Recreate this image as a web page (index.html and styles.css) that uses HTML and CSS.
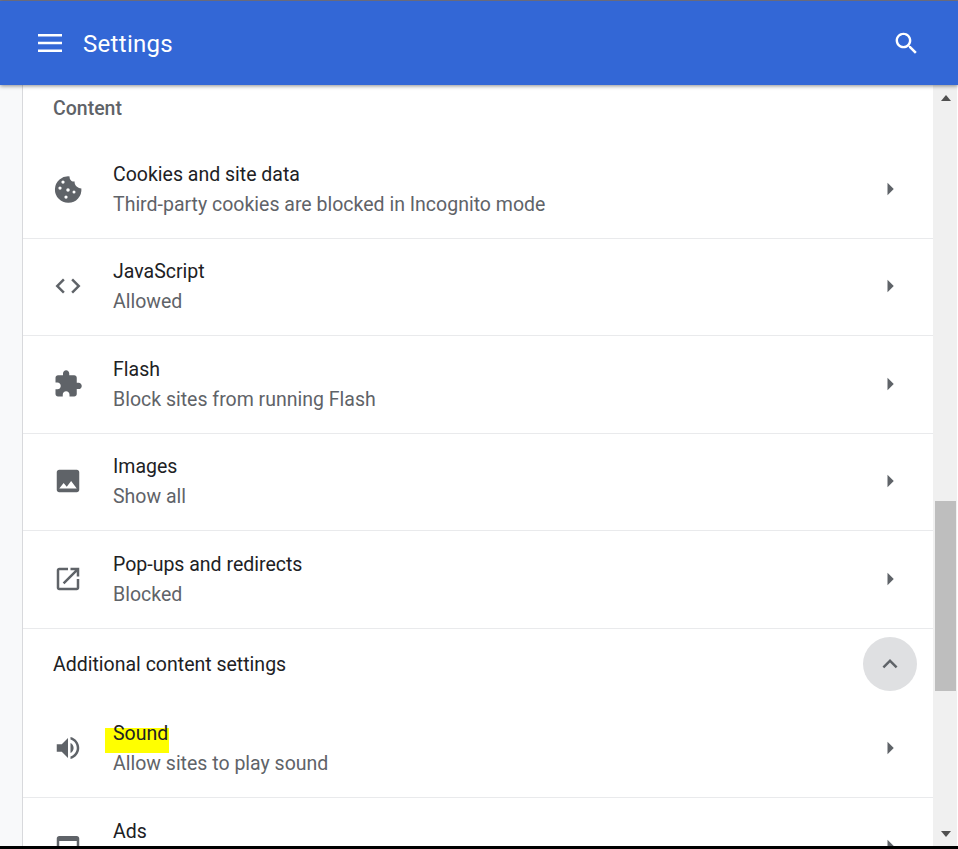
FILE: index.html
```html
<!DOCTYPE html>
<html lang="en">
<head>
<meta charset="utf-8">
<title>Settings</title>
<link rel="stylesheet" href="styles.css">
</head>
<body>
<div class="window">
  <header class="toolbar">
    <svg class="menu-icon" viewBox="0 0 24 18"><path d="M0 0h24v2.6H0zM0 7.7h24v2.6H0zM0 15.4h24V18H0z"/></svg>
    <h1 class="toolbar-title">Settings</h1>
    <svg class="search-icon" viewBox="0 0 24 24"><path d="M15.5 14h-.79l-.28-.27C15.41 12.59 16 11.11 16 9.5 16 5.91 13.09 3 9.5 3S3 5.91 3 9.5 5.91 16 9.5 16c1.61 0 3.09-.59 4.23-1.57l.27.28v.79l5 4.99L20.49 19l-4.99-5zm-6 0C7.01 14 5 11.99 5 9.5S7.01 5 9.5 5 14 7.01 14 9.5 11.99 14 9.5 14z"/></svg>
  </header>
  <div class="viewport">
    <main class="page">
      <section class="card">
        <h2 class="section-title">Content</h2>

        <div class="row row-first">
          <svg class="icon" viewBox="0 0 24 24"><path fill-rule="evenodd" d="M13.3 1.9c-.3 2.5 1.7 4.5 4 4 -.4 2.8 2.3 5.3 5.4 5.6A10.6 10.6 0 1 1 13.3 1.9zM6.7 6.4a1.3 1.3 0 1 0 2.6 0a1.3 1.3 0 1 0-2.6 0zM4.3 11.2a1.3 1.3 0 1 0 2.6 0a1.3 1.3 0 1 0-2.6 0zM10.6 12.8a1.4 1.4 0 1 0 2.8 0a1.4 1.4 0 1 0-2.8 0zM15.6 14.4a1.2 1.2 0 1 0 2.4 0a1.2 1.2 0 1 0-2.4 0zM9.1 18.4a1.3 1.3 0 1 0 2.6 0a1.3 1.3 0 1 0-2.6 0z"/></svg>
          <div class="row-text">
            <div class="row-title">Cookies and site data</div>
            <div class="row-sub">Third-party cookies are blocked in Incognito mode</div>
          </div>
          <svg class="arrow" viewBox="0 0 24 24"><path d="M10 17l5-5-5-5v10z"/></svg>
        </div>

        <div class="row row-divided">
          <svg class="icon" viewBox="0 0 24 24"><path d="M9.4 16.6L4.8 12l4.6-4.6L8 6l-6 6 6 6 1.4-1.4zm5.2 0l4.6-4.6-4.6-4.6L16 6l6 6-6 6-1.4-1.4z"/></svg>
          <div class="row-text">
            <div class="row-title">JavaScript</div>
            <div class="row-sub">Allowed</div>
          </div>
          <svg class="arrow" viewBox="0 0 24 24"><path d="M10 17l5-5-5-5v10z"/></svg>
        </div>

        <div class="row row-divided">
          <svg class="icon" viewBox="0 0 24 24"><path d="M20.5 11H19V7c0-1.1-.9-2-2-2h-4V3.5C13 2.12 11.88 1 10.5 1S8 2.12 8 3.5V5H4c-1.1 0-1.99.9-1.99 2v3.8H3.5c1.49 0 2.7 1.21 2.7 2.7s-1.21 2.7-2.7 2.7H2V20c0 1.1.9 2 2 2h3.8v-1.5c0-1.49 1.21-2.7 2.7-2.7 1.49 0 2.7 1.21 2.7 2.7V22H17c1.1 0 2-.9 2-2v-4h1.5c1.38 0 2.5-1.12 2.5-2.5S21.88 11 20.5 11z"/></svg>
          <div class="row-text">
            <div class="row-title">Flash</div>
            <div class="row-sub">Block sites from running Flash</div>
          </div>
          <svg class="arrow" viewBox="0 0 24 24"><path d="M10 17l5-5-5-5v10z"/></svg>
        </div>

        <div class="row row-divided">
          <svg class="icon" viewBox="0 0 24 24"><path d="M21 19V5c0-1.1-.9-2-2-2H5c-1.1 0-2 .9-2 2v14c0 1.1.9 2 2 2h14c1.1 0 2-.9 2-2zM8.5 13.5l2.5 3.01L14.5 12l4.5 6H5l3.5-4.5z"/></svg>
          <div class="row-text">
            <div class="row-title">Images</div>
            <div class="row-sub">Show all</div>
          </div>
          <svg class="arrow" viewBox="0 0 24 24"><path d="M10 17l5-5-5-5v10z"/></svg>
        </div>

        <div class="row row-divided">
          <svg class="icon" viewBox="0 0 24 24"><path d="M19 19H5V5h7V3H5c-1.11 0-2 .9-2 2v14c0 1.1.89 2 2 2h14c1.1 0 2-.9 2-2v-7h-2v7zM14 3v2h3.59l-9.83 9.83 1.41 1.41L19 6.41V10h2V3h-7z"/></svg>
          <div class="row-text">
            <div class="row-title">Pop-ups and redirects</div>
            <div class="row-sub">Blocked</div>
          </div>
          <svg class="arrow" viewBox="0 0 24 24"><path d="M10 17l5-5-5-5v10z"/></svg>
        </div>

        <div class="expand-row">
          <div class="expand-label">Additional content settings</div>
          <div class="expand-button">
            <svg class="chevron" viewBox="0 0 24 24"><path d="M7.41 15.41L12 10.83l4.59 4.58L18 14l-6-6-6 6z"/></svg>
          </div>
        </div>

        <div class="row">
          <svg class="icon" viewBox="0 0 24 24"><path d="M3 9v6h4l5 5V4L7 9H3zm13.5 3c0-1.77-1.02-3.29-2.5-4.03v8.05c1.48-.73 2.5-2.25 2.5-4.02zM14 3.23v2.06c2.89.86 5 3.54 5 6.71s-2.11 5.85-5 6.71v2.06c4.01-.91 7-4.49 7-8.77s-2.99-7.86-7-8.77z"/></svg>
          <div class="row-text">
            <div class="row-title"><span class="marked">Sound</span></div>
            <div class="row-sub">Allow sites to play sound</div>
          </div>
          <svg class="arrow" viewBox="0 0 24 24"><path d="M10 17l5-5-5-5v10z"/></svg>
        </div>

        <div class="row row-divided">
          <svg class="icon" viewBox="0 0 24 24"><path d="M19 4H5c-1.11 0-2 .9-2 2v12c0 1.1.89 2 2 2h14c1.1 0 2-.9 2-2V6c0-1.1-.89-2-2-2zm0 14H5V8h14v10z"/></svg>
          <div class="row-text">
            <div class="row-title">Ads</div>
            <div class="row-sub row-sub-empty"></div>
          </div>
          <svg class="arrow" viewBox="0 0 24 24"><path d="M10 17l5-5-5-5v10z"/></svg>
        </div>
      </section>
    </main>
    <div class="scrollbar">
      <div class="scroll-up"></div>
      <div class="scroll-thumb"></div>
      <div class="scroll-down"></div>
    </div>
  </div>
  <div class="bottom-edge"></div>
</div>
</body>
</html>
```
FILE: styles.css
```css
* {
  box-sizing: border-box;
}

html,
body {
  margin: 0;
  padding: 0;
  height: 849px;
  overflow: hidden;
}

body {
  font-family: Roboto, "Liberation Sans", sans-serif;
  background: #fff;
}

.window {
  display: flex;
  flex-direction: column;
  height: 849px;
  border-top: 1px solid #77778a;
}

.toolbar {
  position: relative;
  z-index: 2;
  display: flex;
  align-items: center;
  flex: 0 0 84px;
  padding: 0 37px 0 38px;
  background: #3367d6;
  box-shadow: 0 1px 4px rgba(0, 0, 0, 0.45);
}

.menu-icon {
  width: 24px;
  height: 18px;
  fill: #fff;
}

.toolbar-title {
  margin: 2px 0 0 21px;
  flex: 1;
  font-size: 24px;
  font-weight: 400;
  line-height: 32px;
  letter-spacing: 0.3px;
  color: #fff;
}

.search-icon {
  width: 29px;
  height: 29px;
  fill: #fff;
}

.viewport {
  display: flex;
  flex: 1;
  min-height: 0;
  overflow: hidden;
}

.page {
  flex: 1;
  min-width: 0;
  padding-left: 22px;
  background: #f8f9fa;
}

.card {
  border-left: 1px solid #d8d9dc;
  background: #fff;
}

.section-title {
  margin: 0;
  padding: 9px 0 16.5px 30px;
  font-size: 19.5px;
  font-weight: 500;
  line-height: 30px;
  color: #5f6368;
}

.row {
  display: flex;
  align-items: center;
  height: 97.5px;
  padding: 0 28px 0 30px;
}

.row-first {
  height: 97.25px;
  padding-top: 1px;
}

.row-divided {
  border-top: 1px solid #e9eaec;
}

.icon {
  flex: none;
  width: 30px;
  height: 30px;
  margin-bottom: 2px;
  fill: #5f6368;
}

.row-text {
  flex: 1;
  min-width: 0;
  margin-left: 30px;
  font-size: 19.5px;
  line-height: 30px;
}

.row-title {
  color: #202124;
}

.row-sub {
  color: #5f6368;
}

.row-sub-empty {
  height: 30px;
}

.arrow {
  flex: none;
  width: 30px;
  height: 30px;
  margin-bottom: 2px;
  fill: #5f6368;
}

.expand-row {
  display: flex;
  align-items: center;
  justify-content: space-between;
  height: 72px;
  padding: 0 16px 0 30px;
  border-top: 1px solid #e9eaec;
}

.expand-label {
  margin-top: 1px;
  font-size: 19.5px;
  line-height: 30px;
  color: #202124;
}

.expand-button {
  display: flex;
  align-items: center;
  justify-content: center;
  width: 54px;
  height: 54px;
  border-radius: 50%;
  background: #dfe0e2;
}

.chevron {
  width: 30px;
  height: 30px;
  fill: #5f6368;
}

.marked {
  position: relative;
  z-index: 0;
}

.marked::before {
  content: "";
  position: absolute;
  z-index: -1;
  left: -8px;
  top: 6.5px;
  width: 64px;
  height: 24.5px;
  background: #ffff00;
}

.scrollbar {
  display: flex;
  flex-direction: column;
  align-items: center;
  flex: 0 0 25px;
  padding: 0 1px 0 2px;
  background: #f0f0f0;
  border-right: 1px solid #fff;
}

.scroll-up {
  width: 0;
  height: 0;
  margin-top: 10px;
  border-left: 5.5px solid transparent;
  border-right: 5.5px solid transparent;
  border-bottom: 6px solid #505050;
}

.scroll-thumb {
  align-self: stretch;
  height: 190px;
  margin-top: 400px;
  background: #bebebe;
}

.scroll-down {
  width: 0;
  height: 0;
  margin-top: auto;
  margin-bottom: 9px;
  border-left: 5.5px solid transparent;
  border-right: 5.5px solid transparent;
  border-top: 6px solid #505050;
}

.bottom-edge {
  flex: 0 0 3px;
  background: #000;
}
```
